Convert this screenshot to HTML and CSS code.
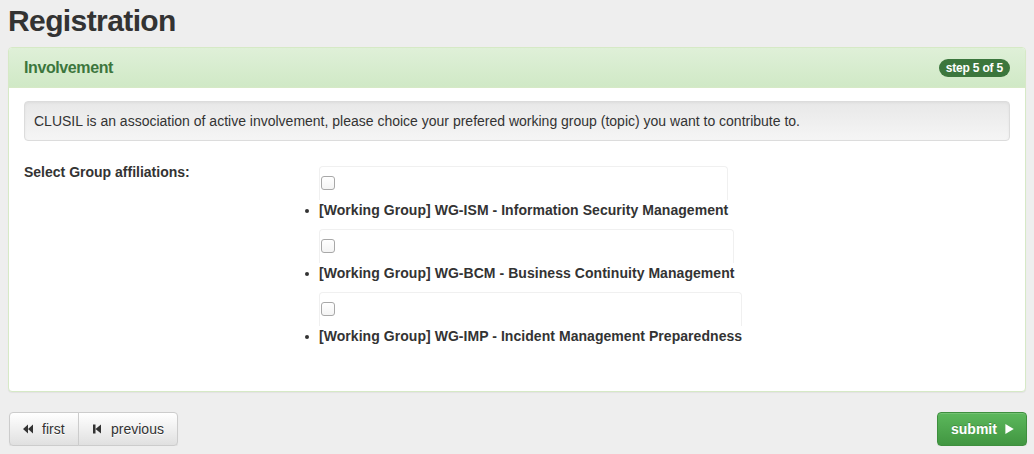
FILE: index.html
```html
<!DOCTYPE html>
<html>
<head>
<meta charset="utf-8">
<link rel="stylesheet" href="styles.css">
</head>
<body>
<h2 class="title">Registration</h2>
<div class="panel">
  <div class="panel-heading">
    <span class="panel-title">Involvement</span>
    <span class="badge">step 5 of 5</span>
  </div>
  <div class="panel-body">
    <div class="well">CLUSIL is an association of active involvement, please choice your prefered working group (topic) you want to contribute to.</div>
    <div class="form-group">
      <label class="control-label">Select Group affiliations:</label>
      <div class="controls">
        <ul class="groups">
          <li class="group">
            <div class="cbox"><span class="checkbox"></span></div>
            <div class="group-label"><span class="bullet"></span>[Working Group] WG-ISM - Information Security Management</div>
          </li>
          <li class="group">
            <div class="cbox"><span class="checkbox"></span></div>
            <div class="group-label"><span class="bullet"></span>[Working Group] WG-BCM - Business Continuity Management</div>
          </li>
          <li class="group">
            <div class="cbox"><span class="checkbox"></span></div>
            <div class="group-label"><span class="bullet"></span>[Working Group] WG-IMP - Incident Management Preparedness</div>
          </li>
        </ul>
      </div>
    </div>
  </div>
</div>
<div class="nav">
  <div class="btn-group">
    <button class="btn btn-default btn-first"><svg class="ico" width="12" height="12" viewBox="0 0 12 12"><path d="M6 1.5V10.5L1 6Z M11 1.5V10.5L6 6Z" fill="#333"/></svg>first</button>
    <button class="btn btn-default btn-prev"><svg class="ico" width="12" height="12" viewBox="0 0 12 12"><path d="M2 1.5H4.5V10.5H2Z M10 1.5V10.5L4.5 6Z" fill="#333"/></svg>previous</button>
  </div>
  <button class="btn btn-success">submit<svg class="ico-r" width="12" height="14" viewBox="0 0 12 14"><path d="M0.5 0.5L11.5 7L0.5 13.5Z" fill="#fff"/></svg></button>
</div>
</body>
</html>
```

FILE: styles.css
```css
* { box-sizing: border-box; }
html, body { margin: 0; padding: 0; }
body {
  background: #eeeeee;
  font-family: "Liberation Sans", Arial, sans-serif;
  font-size: 14px;
  line-height: 20px;
  color: #333;
  padding: 0 8px;
}
.title {
  margin: 0;
  padding-top: 3px;
  font-size: 30px;
  line-height: 36px;
  font-weight: bold;
  color: #333;
  height: 47px;
  letter-spacing: -0.6px;
}
.panel {
  background: #fff;
  border: 1px solid #d6e9c6;
  border-radius: 4px;
  box-shadow: 0 1px 1px rgba(0,0,0,0.05);
  height: 345px;
}
.panel-heading {
  display: flex;
  justify-content: space-between;
  align-items: center;
  height: 40px;
  padding: 0 15px;
  background: linear-gradient(to bottom, #dff0d8 0%, #d0e9c6 100%);
  border-bottom: 1px solid #d6e9c6;
  border-radius: 3px 3px 0 0;
  color: #3c763d;
}
.panel-title { font-size: 16px; font-weight: bold; letter-spacing: -0.4px; }
.badge {
  background: #3c763d;
  color: #fff;
  font-size: 12px;
  font-weight: bold;
  line-height: 12px;
  padding: 3px 7px;
  border-radius: 10px;
  letter-spacing: -0.2px;
}
.panel-body { padding: 13px 15px 15px; }
.well {
  background: linear-gradient(to bottom, #e8e8e8 0%, #f5f5f5 100%);
  border: 1px solid #dcdcdc;
  border-radius: 4px;
  padding: 9px;
  box-shadow: inset 0 1px 3px rgba(0,0,0,0.05), 0 1px 0 rgba(255,255,255,0.1);
  margin-bottom: 20px;
}
.form-group { display: flex; }
.control-label {
  width: 254px;
  font-weight: bold;
  padding-top: 1px;
}
.groups {
  list-style: none;
  margin: 5px 0 0;
  padding: 0 0 0 41px;
}
.group {
  display: flex;
  flex-direction: column;
  width: max-content;
  margin-bottom: 9px;
}
.cbox {
  height: 34px;
  border: 1px solid #f0f0f0;
  border-bottom: none;
  border-radius: 4px 4px 0 0;
  padding: 9px 0 0 1px;
}
.checkbox {
  display: block;
  width: 14px;
  height: 14px;
  border: 1px solid #a8a8a8;
  border-radius: 3px;
  background: linear-gradient(#fff, #f4f4f4);
}
.group-label {
  position: relative;
  font-weight: bold;
  white-space: nowrap;
  letter-spacing: 0.05px;
}
.bullet {
  position: absolute;
  left: -14px;
  top: 9px;
  width: 4px;
  height: 4px;
  border-radius: 50%;
  background: #333;
}
.nav {
  display: flex;
  justify-content: space-between;
  padding-top: 20px;
}
.btn-group { display: flex; margin-left: 1px; }
.btn {
  font-family: "Liberation Sans", Arial, sans-serif;
  font-size: 14px;
  height: 34px;
  padding: 0 12px;
  display: flex;
  align-items: center;
  border-radius: 4px;
  cursor: pointer;
  box-shadow: inset 0 1px 0 rgba(255,255,255,0.15), 0 1px 1px rgba(0,0,0,0.075);
}
.btn-default {
  color: #333;
  background: linear-gradient(to bottom, #fff 0%, #e0e0e0 100%);
  border: 1px solid #ccc;
  text-shadow: 0 1px 0 #fff;
}
.btn-first { width: 70px; border-radius: 4px 0 0 4px; }
.btn-prev { width: 100px; border-radius: 0 4px 4px 0; margin-left: -1px; }
.ico { margin-right: 8px; }
.btn-success {
  color: #fff;
  font-weight: bold;
  width: 90px;
  background: linear-gradient(to bottom, #5cb85c 0%, #419641 100%);
  border: 1px solid #3e8f3e;
  text-shadow: 0 -1px 0 rgba(0,0,0,0.2);
  padding: 0 12px 0 13px;
  justify-content: space-between;
  margin-right: -1px;
}
.ico-r { margin-left: 8px; }
```
